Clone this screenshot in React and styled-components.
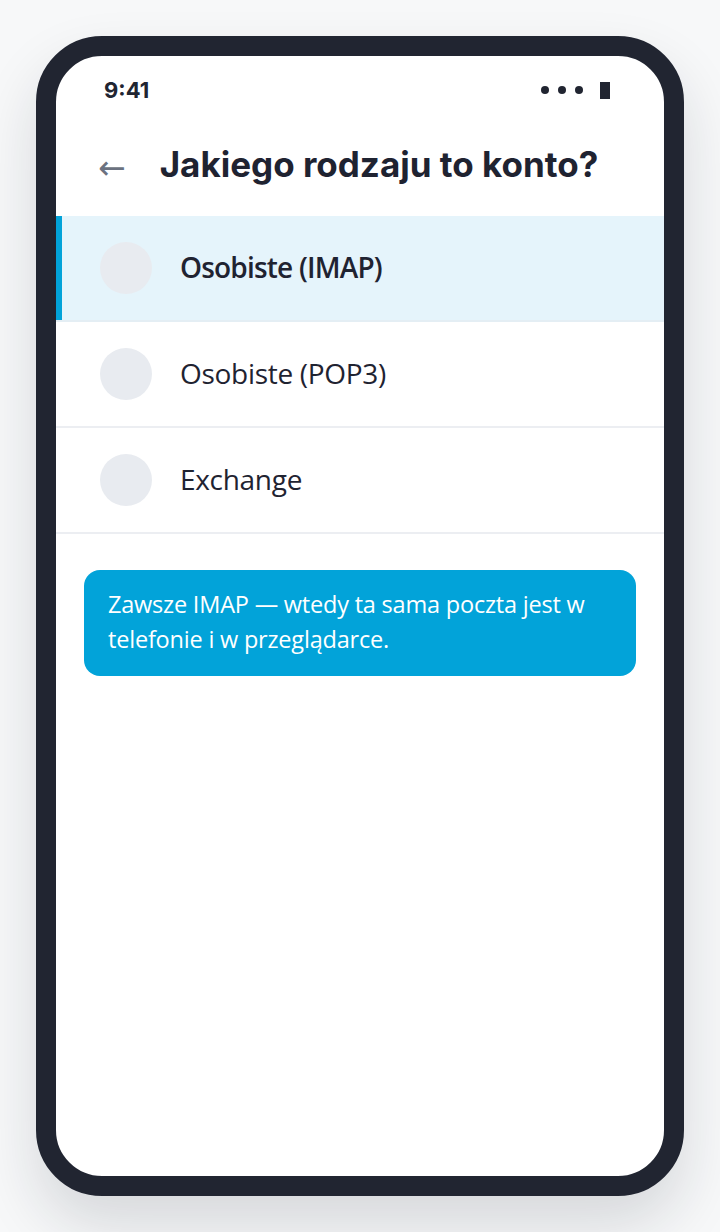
import React from 'react';
import styled, { createGlobalStyle } from 'styled-components';

const GlobalStyle = createGlobalStyle`
  html, body {
    margin: 0;
    padding: 0;
    background: #f7f8f9;
  }
  body {
    font-family: "Open Sans", "Liberation Sans", sans-serif;
  }
`;

const Page = styled.div`
  width: 720px;
  height: 1232px;
  padding: 36px;
  box-sizing: border-box;
`;

const Phone = styled.div`
  width: 648px;
  height: 1160px;
  box-sizing: border-box;
  border: 20px solid #212531;
  border-radius: 66px;
  background: #fff;
  overflow: hidden;
  box-shadow: 0 30px 60px rgba(20, 25, 40, 0.14);
  display: flex;
  flex-direction: column;
`;

const StatusBar = styled.div`
  height: 68px;
  padding: 0 54px 0 48px;
  display: flex;
  align-items: center;
  justify-content: space-between;
  font-family: Inter, "Liberation Sans", sans-serif;
  font-weight: 700;
  font-size: 22px;
  color: #212531;
`;

const StatusIcons = styled.div`
  display: flex;
  align-items: center;
  gap: 9px;
`;

const Dot = styled.span`
  width: 8px;
  height: 8px;
  border-radius: 50%;
  background: #212531;
`;

const Battery = styled.span`
  width: 10px;
  height: 17px;
  margin-left: 8px;
  background: #212531;
`;

const Header = styled.div`
  height: 92px;
  box-sizing: border-box;
  padding: 0 0 12px 42px;
  display: flex;
  align-items: center;
  gap: 34px;
`;

const Back = styled.span`
  font-family: "DejaVu Sans", sans-serif;
  font-size: 33px;
  color: #6b7280;
  line-height: 1;
  margin-top: 6px;
`;

const Title = styled.h1`
  margin: 0;
  font-family: Inter, "Liberation Sans", sans-serif;
  font-weight: 700;
  font-size: 35px;
  color: #1f2331;
`;

const List = styled.div`
  display: flex;
  flex-direction: column;
`;

const Row = styled.div`
  height: 106px;
  box-sizing: border-box;
  display: flex;
  align-items: center;
  gap: 28px;
  padding-left: 44px;
  border-bottom: 2px solid ${p => (p.$active ? '#e4eef4' : '#eceef2')};
  background: ${p => (p.$active ? '#e5f4fb' : '#fff')};
  box-shadow: ${p => (p.$active ? 'inset 6px 0 0 #02a3d9' : 'none')};
`;

const Radio = styled.span`
  width: 52px;
  height: 52px;
  border-radius: 50%;
  background: #e8ebf0;
  flex-shrink: 0;
`;

const Label = styled.span`
  font-size: 28px;
  font-weight: ${p => (p.$active ? 600 : 400)};
  color: #1f2331;
  letter-spacing: ${p => (p.$active ? '-0.8px' : '-0.3px')};
  margin-top: -3px;
`;

const Tip = styled.div`
  margin: 36px 28px 0;
  padding: 17px 24px 19px;
  border-radius: 16px;
  background: #02a3d9;
  color: #fff;
  font-size: 23.5px;
  line-height: 35px;
  letter-spacing: -0.2px;
`;

const options = [
  { label: 'Osobiste (IMAP)', active: true },
  { label: 'Osobiste (POP3)' },
  { label: 'Exchange' },
];

export default function App() {
  return (
    <Page>
      <GlobalStyle />
      <Phone>
        <StatusBar>
          <span>9:41</span>
          <StatusIcons>
            <Dot />
            <Dot />
            <Dot />
            <Battery />
          </StatusIcons>
        </StatusBar>
        <Header>
          <Back>←</Back>
          <Title>Jakiego rodzaju to konto?</Title>
        </Header>
        <List>
          {options.map(o => (
            <Row key={o.label} $active={o.active}>
              <Radio />
              <Label $active={o.active}>{o.label}</Label>
            </Row>
          ))}
        </List>
        <Tip>Zawsze IMAP — wtedy ta sama poczta jest w telefonie i w przeglądarce.</Tip>
      </Phone>
    </Page>
  );
}
